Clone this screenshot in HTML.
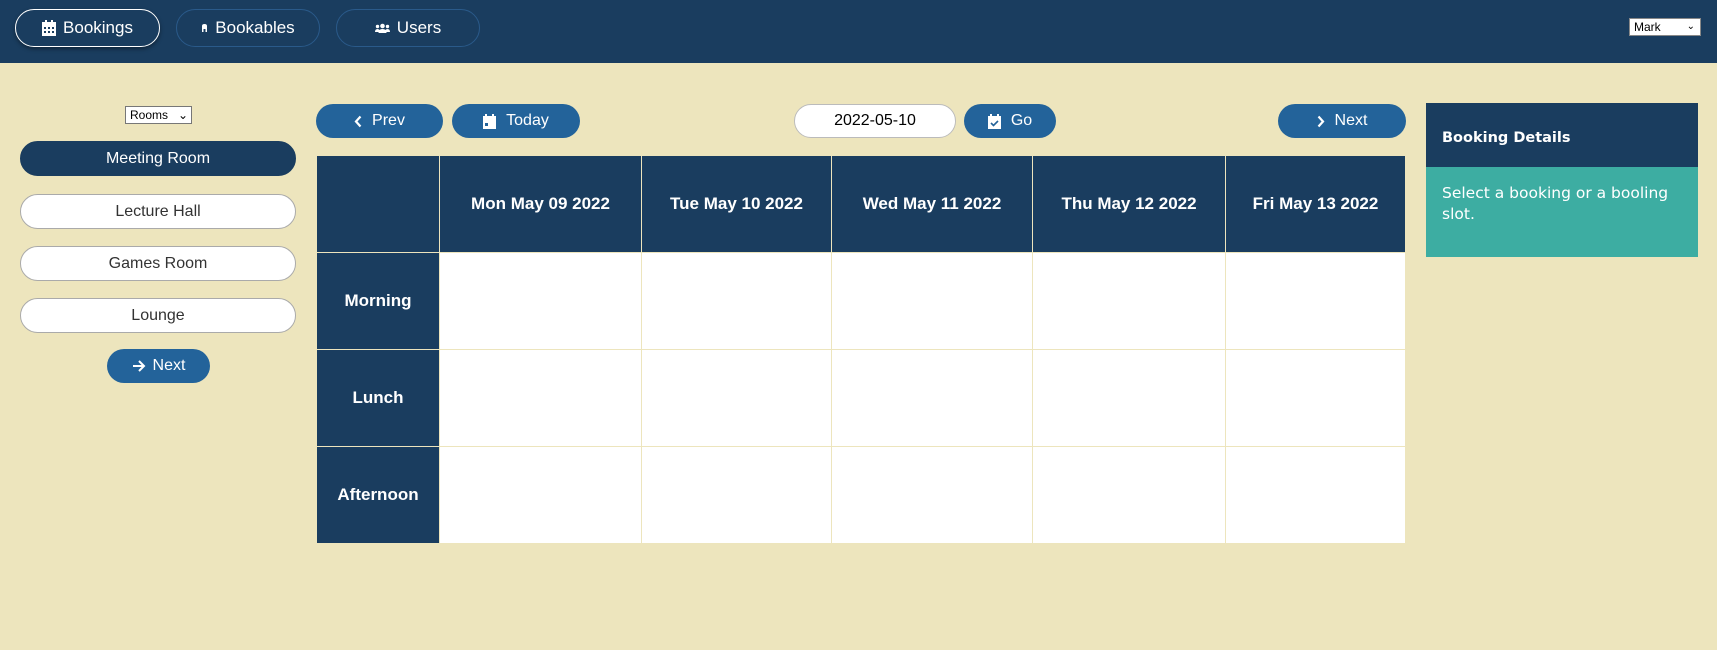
<!DOCTYPE html>
<html><head><style>
*{box-sizing:border-box;margin:0;padding:0}
body{width:1717px;height:650px;background:#ede5bd;font-family:"Liberation Sans",sans-serif;position:relative;overflow:hidden}
.hdr{position:absolute;left:0;top:0;width:1717px;height:63px;background:#1a3d5f}
.nb{position:absolute;top:9px;height:38px;border:1px solid #2a5a8a;border-radius:20px;color:#fff;font-size:17px;display:flex;align-items:center;justify-content:center;gap:7px}
.ab{position:absolute;display:flex;align-items:center;justify-content:center;gap:10px;color:#fff;background:#23639a;border-radius:18px;font-size:16px}
.room{position:absolute;left:20px;width:276px;height:35px;border-radius:18px;border:1px solid #aaa;background:#fff;color:#333;font-size:16px;display:flex;align-items:center;justify-content:center}
table{position:absolute;left:316px;top:155px;border-collapse:collapse;table-layout:fixed}
td,th{border:1px solid #ede5bd;padding:0}
th{background:#1a3d5f;color:#fff;font-size:17px;font-family:"Liberation Sans",sans-serif;font-weight:bold}
td{background:#fff}
</style></head><body>
<div class="hdr"></div>
<div class="nb" style="left:15px;width:145px;border:1px solid #fff;box-shadow:0 2px 4px rgba(0,0,0,.4)"><svg width="14" height="16" viewBox="0 0 14 16"><rect x="0" y="2" width="14" height="14" fill="#fff"/><rect x="3" y="0" width="2" height="4" fill="#fff"/><rect x="9" y="0" width="2" height="4" fill="#fff"/><g fill="#1a3d5f"><rect x="2" y="7" width="2" height="2"/><rect x="6" y="7" width="2" height="2"/><rect x="10" y="7" width="2" height="2"/><rect x="2" y="11" width="2" height="2"/><rect x="6" y="11" width="2" height="2"/><rect x="10" y="11" width="2" height="2"/></g></svg>Bookings</div>
<div class="nb" style="left:176px;width:144px"><svg width="7" height="8"><path d="M1 8V2Q1 0 3.5 0T6 2V8H4.5V5H2.5V8Z" fill="#fff"/></svg>Bookables</div>
<div class="nb" style="left:336px;width:144px"><svg width="15" height="10"><circle cx="7.5" cy="3" r="2.3" fill="#fff"/><circle cx="2.5" cy="3.5" r="1.7" fill="#fff"/><circle cx="12.5" cy="3.5" r="1.7" fill="#fff"/><path d="M3.5 10Q3.5 6 7.5 6T11.5 10ZM0 9Q0 6 2.5 6T5 9ZM10 9Q10 6 12.5 6T15 9Z" fill="#fff"/></svg>Users</div>
<div style="position:absolute;left:1629px;top:18px;width:72px;height:18px;background:#fff;border:1px solid #888;font-size:12px;padding-left:4px;line-height:16px">Mark<span style="position:absolute;right:5px;font-size:10px">⌄</span></div>

<div style="position:absolute;left:125px;top:106px;width:67px;height:18px;background:#fff;border:1px solid #777;font-size:12px;padding-left:4px;line-height:16px">Rooms<span style="position:absolute;right:3px">⌄</span></div>
<div class="room" style="top:141px;background:#1a3d5f;color:#fff;border-color:#1a3d5f">Meeting Room</div>
<div class="room" style="top:194px">Lecture Hall</div>
<div class="room" style="top:246px">Games Room</div>
<div class="room" style="top:298px">Lounge</div>
<div class="ab" style="left:107px;top:349px;width:103px;height:34px;gap:7px"><svg width="14" height="12"><path d="M1 6H12M7 1L12 6L7 11" stroke="#fff" stroke-width="2" fill="none"/></svg>Next</div>

<div class="ab" style="left:316px;top:104px;width:127px;height:34px"><svg width="8" height="13"><path d="M6.5 1.5L2 6.5L6.5 11.5" stroke="#fff" stroke-width="2.2" fill="none"/></svg>Prev</div>
<div class="ab" style="left:452px;top:104px;width:128px;height:34px"><svg width="13" height="15"><rect y="2" width="13" height="13" fill="#fff"/><rect x="2" width="2" height="3" fill="#fff"/><rect x="9" width="2" height="3" fill="#fff"/><rect x="2" y="9" width="3" height="3" fill="#23639a"/></svg>Today</div>
<div style="position:absolute;left:794px;top:104px;width:162px;height:34px;border-radius:17px;background:#fff;border:1px solid #bbb;font-size:16px;display:flex;align-items:center;justify-content:center">2022-05-10</div>
<div class="ab" style="left:964px;top:104px;width:92px;height:34px"><svg width="13" height="15"><rect y="2" width="13" height="13" fill="#fff"/><rect x="2" width="2" height="3" fill="#fff"/><rect x="9" width="2" height="3" fill="#fff"/><path d="M3 9l2.5 2.5L10 7" stroke="#23639a" stroke-width="1.6" fill="none"/></svg>Go</div>
<div class="ab" style="left:1278px;top:104px;width:128px;height:34px"><svg width="8" height="13"><path d="M1.5 1.5L6 6.5L1.5 11.5" stroke="#fff" stroke-width="2.2" fill="none"/></svg>Next</div>

<table style="width:1089px">
<colgroup><col style="width:123px"><col style="width:202px"><col style="width:190px"><col style="width:201px"><col style="width:193px"><col style="width:180px"></colgroup>
<tr style="height:97px"><th></th><th>Mon May 09 2022</th><th>Tue May 10 2022</th><th>Wed May 11 2022</th><th>Thu May 12 2022</th><th>Fri May 13 2022</th></tr>
<tr style="height:97px"><th>Morning</th><td></td><td></td><td></td><td></td><td></td></tr>
<tr style="height:97px"><th>Lunch</th><td></td><td></td><td></td><td></td><td></td></tr>
<tr style="height:97px"><th>Afternoon</th><td></td><td></td><td></td><td></td><td></td></tr>
</table>

<div style="position:absolute;left:1426px;top:103px;width:272px;height:64px;background:#1a3d5f;color:#fff;font-family:'DejaVu Sans',sans-serif;font-weight:bold;font-size:14.5px;padding:27px 0 0 16px">Booking Details</div>
<div style="position:absolute;left:1426px;top:167px;width:272px;height:90px;background:#3dada2;color:#fff;font-family:'DejaVu Sans',sans-serif;font-size:15.5px;padding:16px 16px;line-height:21px">Select a booking or a booling slot.</div>
</body></html>
